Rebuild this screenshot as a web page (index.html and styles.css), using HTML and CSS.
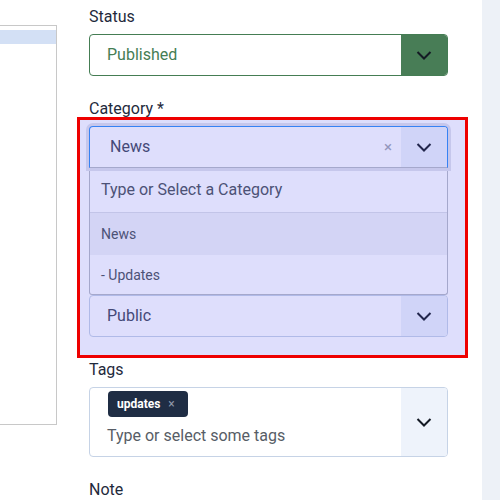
FILE: index.html
```html
<!DOCTYPE html>
<html lang="en">
<head>
<meta charset="utf-8">
<title>Article options</title>
<link rel="stylesheet" href="styles.css">
</head>
<body>
<div class="page">
  <aside class="left-panel">
    <div class="left-row"></div>
  </aside>

  <main class="form">
    <div class="field">
      <div class="label">Status</div>
      <div class="select select-green">
        <div class="select-value">Published</div>
        <div class="select-btn btn-green">
          <svg width="16" height="9" viewBox="0 0 16 9"><path d="M1.5 1 L8 7.5 L14.5 1" fill="none" stroke="#141a24" stroke-width="2"/></svg>
        </div>
      </div>
    </div>

    <div class="field">
      <div class="label">Category *</div>
      <div class="choices">
        <div class="select select-focus">
          <div class="select-value value-cat">News</div>
          <span class="clear">×</span>
          <div class="select-btn">
            <svg width="16" height="9" viewBox="0 0 16 9"><path d="M1.5 1 L8 7.5 L14.5 1" fill="none" stroke="#141a24" stroke-width="2"/></svg>
          </div>
        </div>
        <div class="dropdown">
          <div class="dd-input">Type or Select a Category</div>
          <div class="dd-item dd-active">News</div>
          <div class="dd-item dd-last">- Updates</div>
        </div>
      </div>
      <div class="select select-plain">
        <div class="select-value">Public</div>
        <div class="select-btn">
          <svg width="16" height="9" viewBox="0 0 16 9"><path d="M1.5 1 L8 7.5 L14.5 1" fill="none" stroke="#141a24" stroke-width="2"/></svg>
        </div>
      </div>
    </div>

    <div class="field">
      <div class="label">Tags</div>
      <div class="tags">
        <div class="tags-main">
          <span class="chip"><span class="chip-text">updates</span><span class="chip-x">×</span></span>
          <div class="tags-input">Type or select some tags</div>
        </div>
        <div class="select-btn">
          <svg width="16" height="9" viewBox="0 0 16 9"><path d="M1.5 1 L8 7.5 L14.5 1" fill="none" stroke="#141a24" stroke-width="2"/></svg>
        </div>
      </div>
    </div>

    <div class="field">
      <div class="label">Note</div>
    </div>

    <div class="highlight"></div>
  </main>

  <div class="sidebar"></div>
</div>
</body>
</html>
```

FILE: styles.css
```css
* { box-sizing: border-box; }

html, body {
  margin: 0;
  padding: 0;
  background: #ffffff;
}

body {
  font-family: Roboto, "Liberation Sans", sans-serif;
  font-size: 16px;
  line-height: 24px;
  color: #1f2a3c;
}

.page {
  display: flex;
  height: 500px;
  overflow: hidden;
}

.left-panel {
  flex: 0 0 57px;
  height: 400px;
  margin-top: 25px;
  border-top: 1px solid #c8c8c8;
  border-right: 1px solid #c8c8c8;
  border-bottom: 1px solid #c8c8c8;
}

.left-row {
  margin-top: 4px;
  height: 14px;
  background: #d3e0f5;
}

.form {
  position: relative;
  flex: 0 0 359px;
  margin-left: 32px;
  padding-top: 5px;
}

.field {
  margin-bottom: 21px;
}

.label {
  margin-bottom: 5px;
}

.select {
  display: flex;
  align-items: stretch;
  height: 42px;
  border: 1px solid #c6d3e6;
  border-radius: 4px;
  overflow: hidden;
  background: #ffffff;
}

.select-value {
  flex: 1;
  display: flex;
  align-items: center;
  padding-left: 17px;
  color: #3e4559;
}

.select-btn {
  flex: 0 0 46px;
  display: flex;
  align-items: center;
  justify-content: center;
  background: #eef3fb;
}

.select-green {
  border-color: #457d54;
}

.select-green .select-value {
  color: #457d54;
}

.btn-green {
  background: #487d56;
}

.select-focus {
  border-color: #2f8cf5;
  border-bottom-color: #b8bcc4;
  border-radius: 4px 4px 0 0;
  box-shadow: 0 0 0 3px #e2e3ec;
  position: relative;
}

.value-cat {
  padding-left: 20px;
}

.clear {
  display: flex;
  align-items: center;
  padding-right: 9px;
  font-size: 15px;
  color: #a2a6b0;
}

.dropdown {
  border: 1px solid #b8bcc4;
  border-top: none;
  border-radius: 0 0 3px 3px;
  background: #ffffff;
  color: #495057;
}

.dd-input {
  height: 45px;
  display: flex;
  align-items: center;
  padding-left: 11px;
  border-bottom: 1px solid #dcdfe6;
}

.dd-item {
  height: 42px;
  display: flex;
  align-items: center;
  padding-left: 11px;
  font-size: 14px;
}

.dd-last {
  height: 39px;
}

.dd-active {
  background: #f2f3f7;
}

.select-plain .select-value {
  padding-left: 17px;
}

.tags {
  display: flex;
  height: 70px;
  border: 1px solid #c6d3e6;
  border-radius: 4px;
  overflow: hidden;
}

.tags-main {
  flex: 1;
  padding: 3px 0 0 17px;
}

.chip {
  display: inline-flex;
  align-items: center;
  height: 26px;
  margin-left: 1px;
  padding: 0 13px 0 9px;
  background: #1f2d44;
  border-radius: 4px;
  color: #ffffff;
  font-size: 12px;
  font-weight: 700;
  line-height: 26px;
}

.chip-x {
  margin-left: 8px;
  font-weight: 400;
  font-size: 12px;
  color: #8e98aa;
}

.tags-input {
  margin-top: 7px;
  color: #575d66;
}

.highlight {
  position: absolute;
  left: -12px;
  top: 117px;
  width: 391px;
  height: 241px;
  border: 3px solid #ee0000;
  background: rgba(90, 90, 240, 0.2);
  pointer-events: none;
}

.sidebar {
  flex: 0 0 18px;
  margin-left: 34px;
  height: 500px;
  background: #edf1f7;
}
```
